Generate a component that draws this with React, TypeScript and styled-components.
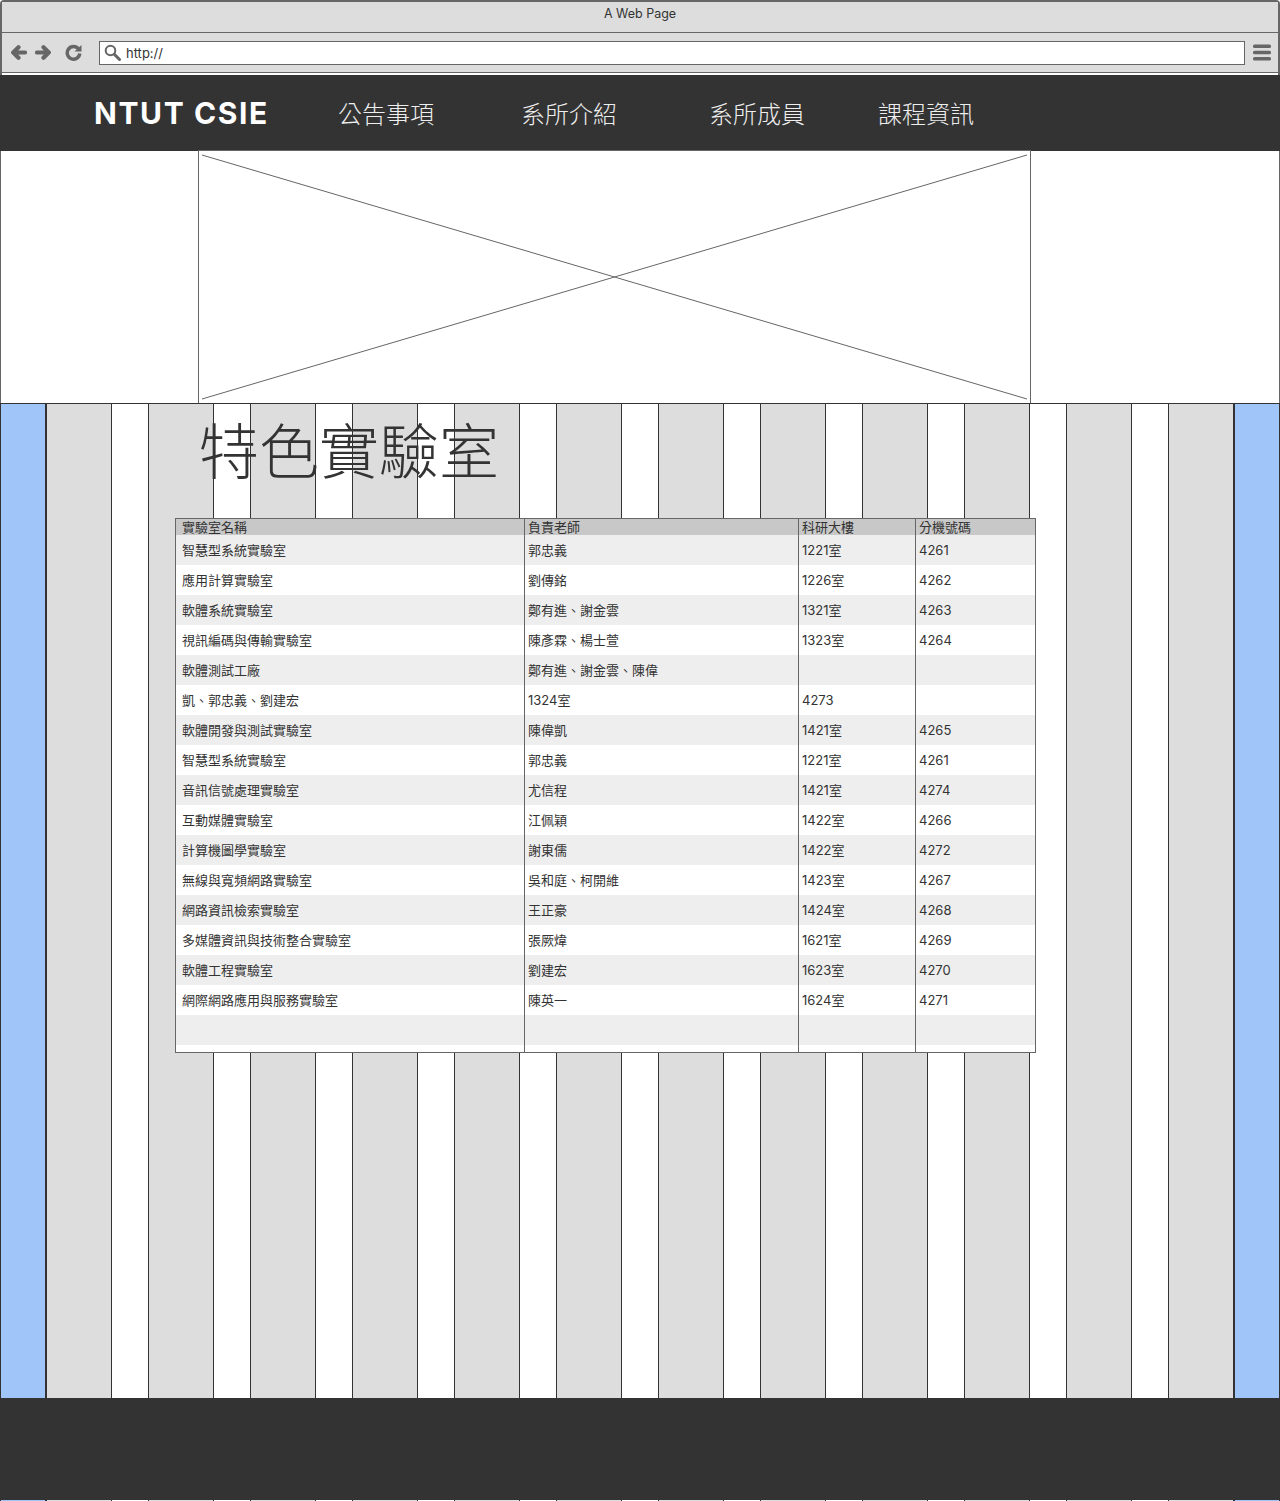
import React from "react";
import styled, { createGlobalStyle } from "styled-components";

const CJK = `"Inter", "Noto Sans CJK TC", sans-serif`;
const SERIF = `"Liberation Serif", "Noto Sans CJK TC", serif`;

const Global = createGlobalStyle`
  html, body { margin: 0; padding: 0; background: #fff; }
  * { box-sizing: border-box; }
`;

const Page = styled.div`
  width: 1280px;
  height: 1501px;
  overflow: hidden;
  font-family: ${CJK};
`;

const Chrome = styled.div`
  height: 75px;
  border: 2px solid #666;
  border-bottom: 0;
  border-radius: 4px 4px 0 0;
  background: #fff;
`;

const TitleBar = styled.div`
  height: 31px;
  background: #ddd;
  border-bottom: 1px solid #666;
  display: flex;
  justify-content: center;
  padding-top: 4px;
  font-size: 12.5px;
  line-height: 15px;
  color: #333;
`;

const Toolbar = styled.div`
  height: 40px;
  background: #ddd;
  border-bottom: 1px solid #666;
  display: flex;
  align-items: center;
  padding: 0 7px 0 8px;
`;

const ToolIcon = styled.svg<{ $gap: number }>`
  flex: none;
  margin-right: ${(p) => p.$gap}px;
  color: #666;
`;

const MenuIcon = styled.svg`
  flex: none;
  margin-left: 8px;
  color: #666;
`;

const UrlBar = styled.div`
  flex: none;
  width: 1146px;
  height: 24px;
  background: #fff;
  border: 1px solid #666;
  display: flex;
  align-items: center;
  padding-left: 4px;
  gap: 5px;
  font-size: 13px;
  color: #333;
`;

const Nav = styled.nav`
  height: 76px;
  background: #333;
  display: flex;
  align-items: center;
`;

const Brand = styled.div`
  margin-left: 94px;
  width: 174px;
  font-size: 30px;
  font-weight: 700;
  letter-spacing: 1.6px;
  color: #fff;
  white-space: nowrap;
`;

const NavItem = styled.a<{ $gap: number }>`
  margin: 0 0 2px ${(p) => p.$gap}px;
  width: 96px;
  font-family: ${SERIF};
  font-size: 24px;
  font-weight: 300;
  color: #eee;
  white-space: nowrap;
`;

const Hero = styled.section`
  display: flow-root;
  height: 252px;
  background: #fff;
  border-left: 1px solid #666;
  border-right: 1px solid #666;
`;

const Placeholder = styled.div`
  margin: -1px 0 0 197px;
  width: 833px;
  height: 253px;
  border: 1px solid #666;
  border-bottom: 0;
  background: #fff;
`;

const CrossLines = styled.svg`
  display: block;
`;

const Stage = styled.main`
  height: 1098px;
  border-top: 1px solid #333;
  display: grid;
  grid-template-columns: 1280px;
  grid-template-rows: 1097px;
`;

const Columns = styled.div`
  grid-area: 1 / 1;
  display: flex;
`;

const Margin = styled.div`
  flex: none;
  width: 46px;
  background: #a0c5f8;
  border-left: 1px solid #333;
  border-right: 1px solid #333;
`;

const Column = styled.div`
  flex: none;
  width: 66px;
  background: #ddd;
  border-left: 1px solid #333;
  border-right: 1px solid #333;
`;

const Gutter = styled.div`
  flex: none;
  width: 36px;
  background: #fff;
`;

const Content = styled.div`
  grid-area: 1 / 1;
  padding: 0 0 0 175px;
  display: flex;
  flex-direction: column;
  align-items: flex-start;
`;

const Heading = styled.h1`
  margin: 14px 0 0 24px;
  height: 100px;
  font-family: ${SERIF};
  font-size: 60px;
  line-height: 72px;
  font-weight: 300;
  color: #333;
  white-space: nowrap;
`;

const Table = styled.table`
  width: 861px;
  height: 535px;
  table-layout: fixed;
  border-collapse: separate;
  border-spacing: 0;
  border: 1px solid #666;
  background: #fff;
  font-size: 13px;
  color: #333;
`;

const HeadRow = styled.tr`
  height: 16px;
  background: #c8c8c8;
`;

const HeadCell = styled.th<{ $pad: number; $last?: boolean }>`
  padding: 1px 0 0 ${(p) => p.$pad}px;
  height: 16px;
  line-height: 15px;
  font-weight: 400;
  text-align: left;
  overflow: hidden;
  white-space: nowrap;
  border-right: ${(p) => (p.$last ? "0" : "1px solid #666")};
`;

const Row = styled.tr<{ $odd: boolean }>`
  height: 30px;
  background: ${(p) => (p.$odd ? "#eee" : "#fff")};
`;

const Cell = styled.td<{ $pad: number; $last?: boolean }>`
  padding: 0 0 0 ${(p) => p.$pad}px;
  height: 30px;
  line-height: 30px;
  white-space: nowrap;
  overflow: hidden;
  border-right: ${(p) => (p.$last ? "0" : "1px solid #666")};
`;

const TailCell = styled.td<{ $last?: boolean }>`
  height: 7px;
  padding: 0;
  border-right: ${(p) => (p.$last ? "0" : "1px solid #666")};
`;

const Footer = styled.footer`
  grid-area: 1 / 1;
  align-self: end;
  height: 102px;
  margin-bottom: 1px;
  background: #333;
`;

const ROWS: string[][] = [
  ["智慧型系統實驗室", "郭忠義", "1221室", "4261"],
  ["應用計算實驗室", "劉傳銘", "1226室", "4262"],
  ["軟體系統實驗室", "鄭有進、謝金雲", "1321室", "4263"],
  ["視訊編碼與傳輸實驗室", "陳彥霖、楊士萱", "1323室", "4264"],
  ["軟體測試工廠", "鄭有進、謝金雲、陳偉", "", ""],
  ["凱、郭忠義、劉建宏", "1324室", "4273", ""],
  ["軟體開發與測試實驗室", "陳偉凱", "1421室", "4265"],
  ["智慧型系統實驗室", "郭忠義", "1221室", "4261"],
  ["音訊信號處理實驗室", "尤信程", "1421室", "4274"],
  ["互動媒體實驗室", "江佩穎", "1422室", "4266"],
  ["計算機圖學實驗室", "謝東儒", "1422室", "4272"],
  ["無線與寬頻網路實驗室", "吳和庭、柯開維", "1423室", "4267"],
  ["網路資訊檢索實驗室", "王正豪", "1424室", "4268"],
  ["多媒體資訊與技術整合實驗室", "張厥煒", "1621室", "4269"],
  ["軟體工程實驗室", "劉建宏", "1623室", "4270"],
  ["網際網路應用與服務實驗室", "陳英一", "1624室", "4271"],
  ["", "", "", ""],
];

const HEAD = ["實驗室名稱", "負責老師", "科研大樓", "分機號碼"];
const PADS = [6, 3, 3, 3];
const WIDTHS = [349, 274, 117, 119];

export default function App() {
  return (
    <Page>
      <Global />
      <Chrome>
        <TitleBar>A Web Page</TitleBar>
        <Toolbar>
          <ToolIcon $gap={8} width="17" height="17" viewBox="0 0 17 17">
            <path d="M15 8.500H4M8.500 3.200 3.200 8.500 8.500 13.800" fill="none" stroke="currentColor" strokeWidth="4.200" strokeLinecap="round" strokeLinejoin="round" />
          </ToolIcon>
          <ToolIcon $gap={13} width="17" height="17" viewBox="0 0 17 17">
            <path d="M2 8.500H13M8.500 3.200 13.800 8.500 8.500 13.800" fill="none" stroke="currentColor" strokeWidth="4.200" strokeLinecap="round" strokeLinejoin="round" />
          </ToolIcon>
          <ToolIcon $gap={17} width="17" height="17" viewBox="0 0 17 17">
            <path d="M13.500 5A6.300 6.300 0 1 0 14.800 9.500" fill="none" stroke="currentColor" strokeWidth="3.400" />
            <path d="M9.500 7.500H16.500V1z" fill="currentColor" />
          </ToolIcon>
          <UrlBar>
            <svg width="17" height="17" viewBox="0 0 17 17">
              <circle cx="6.500" cy="6.500" r="4.800" fill="none" stroke="#666" strokeWidth="2" />
              <path d="M10.300 10.300 15.500 15.500" stroke="#666" strokeWidth="3" strokeLinecap="round" />
            </svg>
            <span>http://</span>
          </UrlBar>
          <MenuIcon width="18" height="17" viewBox="0 0 18 17">
            <rect x="0" y="0.500" width="18" height="3.500" rx="1.500" fill="currentColor" />
            <rect x="0" y="6.700" width="18" height="3.500" rx="1.500" fill="currentColor" />
            <rect x="0" y="13" width="18" height="3.500" rx="1.500" fill="currentColor" />
          </MenuIcon>
        </Toolbar>
      </Chrome>
      <Nav>
        <Brand>NTUT CSIE</Brand>
        <NavItem $gap={70}>公告事項</NavItem>
        <NavItem $gap={87}>系所介紹</NavItem>
        <NavItem $gap={92}>系所成員</NavItem>
        <NavItem $gap={73}>課程資訊</NavItem>
      </Nav>
      <Hero>
        <Placeholder>
          <CrossLines width="831" height="252" viewBox="0 0 831 252">
            <path d="M3 4 828 248M3 248 828 4" stroke="#666" strokeWidth="1" fill="none" />
          </CrossLines>
        </Placeholder>
      </Hero>
      <Stage>
        <Columns>
          <Margin />
          {Array.from({ length: 12 }, (_, i) => (
            <React.Fragment key={i}>
              <Column />
              {i < 11 && <Gutter />}
            </React.Fragment>
          ))}
          <Margin />
        </Columns>
        <Content>
          <Heading>特色實驗室</Heading>
          <Table>
            <colgroup>
              {WIDTHS.map((w) => (
                <col key={w} width={w} />
              ))}
            </colgroup>
            <thead>
              <HeadRow>
                {HEAD.map((h, i) => (
                  <HeadCell key={h} $pad={PADS[i]} $last={i === 3}>
                    {h}
                  </HeadCell>
                ))}
              </HeadRow>
            </thead>
            <tbody>
              {ROWS.map((r, ri) => (
                <Row key={ri} $odd={ri % 2 === 0}>
                  {r.map((c, ci) => (
                    <Cell key={ci} $pad={PADS[ci]} $last={ci === 3}>
                      {c}
                    </Cell>
                  ))}
                </Row>
              ))}
              <tr>
                <TailCell />
                <TailCell />
                <TailCell />
                <TailCell $last />
              </tr>
            </tbody>
          </Table>
        </Content>
        <Footer />
      </Stage>
    </Page>
  );
}
